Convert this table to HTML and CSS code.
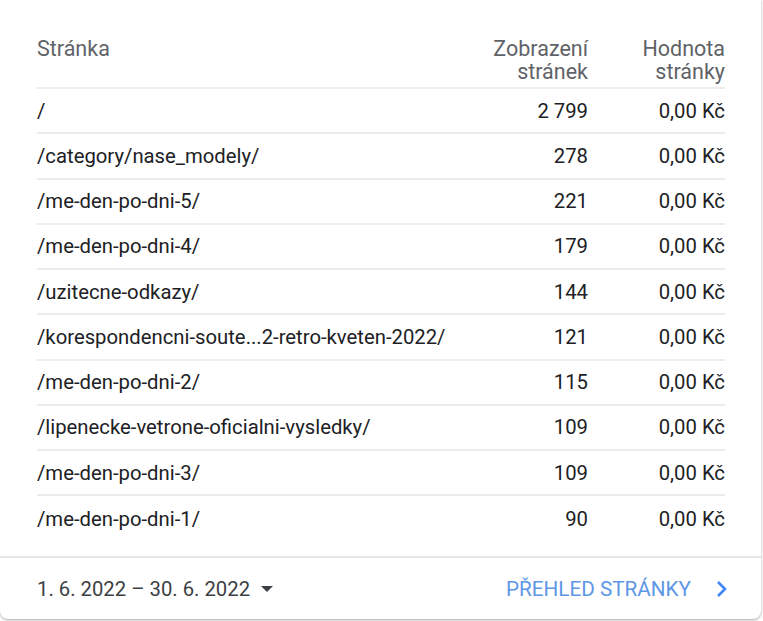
FILE: index.html
```html
<!DOCTYPE html>
<html lang="cs">
<head>
<meta charset="utf-8">
<link rel="stylesheet" href="styles.css">
</head>
<body>
<div class="card">
  <div class="table">
    <div class="row head">
      <div class="c1">Stránka</div>
      <div class="c2">Zobrazení<br>stránek</div>
      <div class="c3">Hodnota<br>stránky</div>
    </div>
    <div class="row"><div class="c1">/</div><div class="c2">2 799</div><div class="c3">0,00 Kč</div></div>
    <div class="row"><div class="c1">/category/nase_modely/</div><div class="c2">278</div><div class="c3">0,00 Kč</div></div>
    <div class="row"><div class="c1">/me-den-po-dni-5/</div><div class="c2">221</div><div class="c3">0,00 Kč</div></div>
    <div class="row"><div class="c1">/me-den-po-dni-4/</div><div class="c2">179</div><div class="c3">0,00 Kč</div></div>
    <div class="row"><div class="c1">/uzitecne-odkazy/</div><div class="c2">144</div><div class="c3">0,00 Kč</div></div>
    <div class="row"><div class="c1">/korespondencni-soute...2-retro-kveten-2022/</div><div class="c2">121</div><div class="c3">0,00 Kč</div></div>
    <div class="row"><div class="c1">/me-den-po-dni-2/</div><div class="c2">115</div><div class="c3">0,00 Kč</div></div>
    <div class="row"><div class="c1">/lipenecke-vetrone-oficialni-vysledky/</div><div class="c2">109</div><div class="c3">0,00 Kč</div></div>
    <div class="row"><div class="c1">/me-den-po-dni-3/</div><div class="c2">109</div><div class="c3">0,00 Kč</div></div>
    <div class="row last"><div class="c1">/me-den-po-dni-1/</div><div class="c2">90</div><div class="c3">0,00 Kč</div></div>
  </div>
  <div class="footer">
    <div class="date">1. 6. 2022 – 30. 6. 2022 <span class="tri"></span></div>
    <div class="link">PŘEHLED STRÁNKY
      <svg class="chev" width="14" height="20" viewBox="0 0 14 20"><path d="M3 3 L10 10 L3 17" fill="none" stroke="#4285f4" stroke-width="2.6"/></svg>
    </div>
  </div>
</div>
</body>
</html>
```
FILE: styles.css
```css
html, body {
  margin: 0;
  padding: 0;
  background: #ffffff;
}
body {
  font-family: Roboto, "Noto Sans", sans-serif;
  width: 763px;
  height: 621px;
  overflow: hidden;
}
.card {
  width: 761px;
  height: 619px;
  background: #fff;
  border-radius: 0 0 8px 8px;
  box-shadow: 0 1px 2px rgba(60, 64, 67, 0.35), 0 1px 3px 1px rgba(60, 64, 67, 0.1);
  display: flex;
  flex-direction: column;
}
.table {
  padding: 37px 0 0 37px;
  width: 688px;
  height: 519px;
  box-sizing: content-box;
}
.row {
  display: grid;
  grid-template-columns: 1fr 130px 137px;
  height: 45.25px;
  align-items: center;
  border-bottom: 2px solid #ececec;
  box-sizing: border-box;
  font-size: 20.3px;
  color: #202124;
}
.row.last { border-bottom: none; }
.row.head {
  height: 52px;
  align-items: start;
  line-height: 23px;
  font-size: 21.5px;
  color: #5f6368;
}
.c2, .c3 { text-align: right; }
.footer {
  border-top: 2px solid #e6e6e6;
  flex: 1;
  display: flex;
  align-items: center;
  justify-content: space-between;
  padding: 0 32px 0 37px;
}
.date {
  font-size: 20.3px;
  color: #3c4043;
  display: flex;
  align-items: center;
  gap: 9px;
}
.tri {
  width: 0;
  height: 0;
  border-left: 6px solid transparent;
  border-right: 6px solid transparent;
  border-top: 6px solid #3c4043;
  margin-left: 2px;
}
.link {
  font-size: 20.7px;
  color: #5e97e6;
  display: flex;
  align-items: center;
  gap: 24px;
}
```
